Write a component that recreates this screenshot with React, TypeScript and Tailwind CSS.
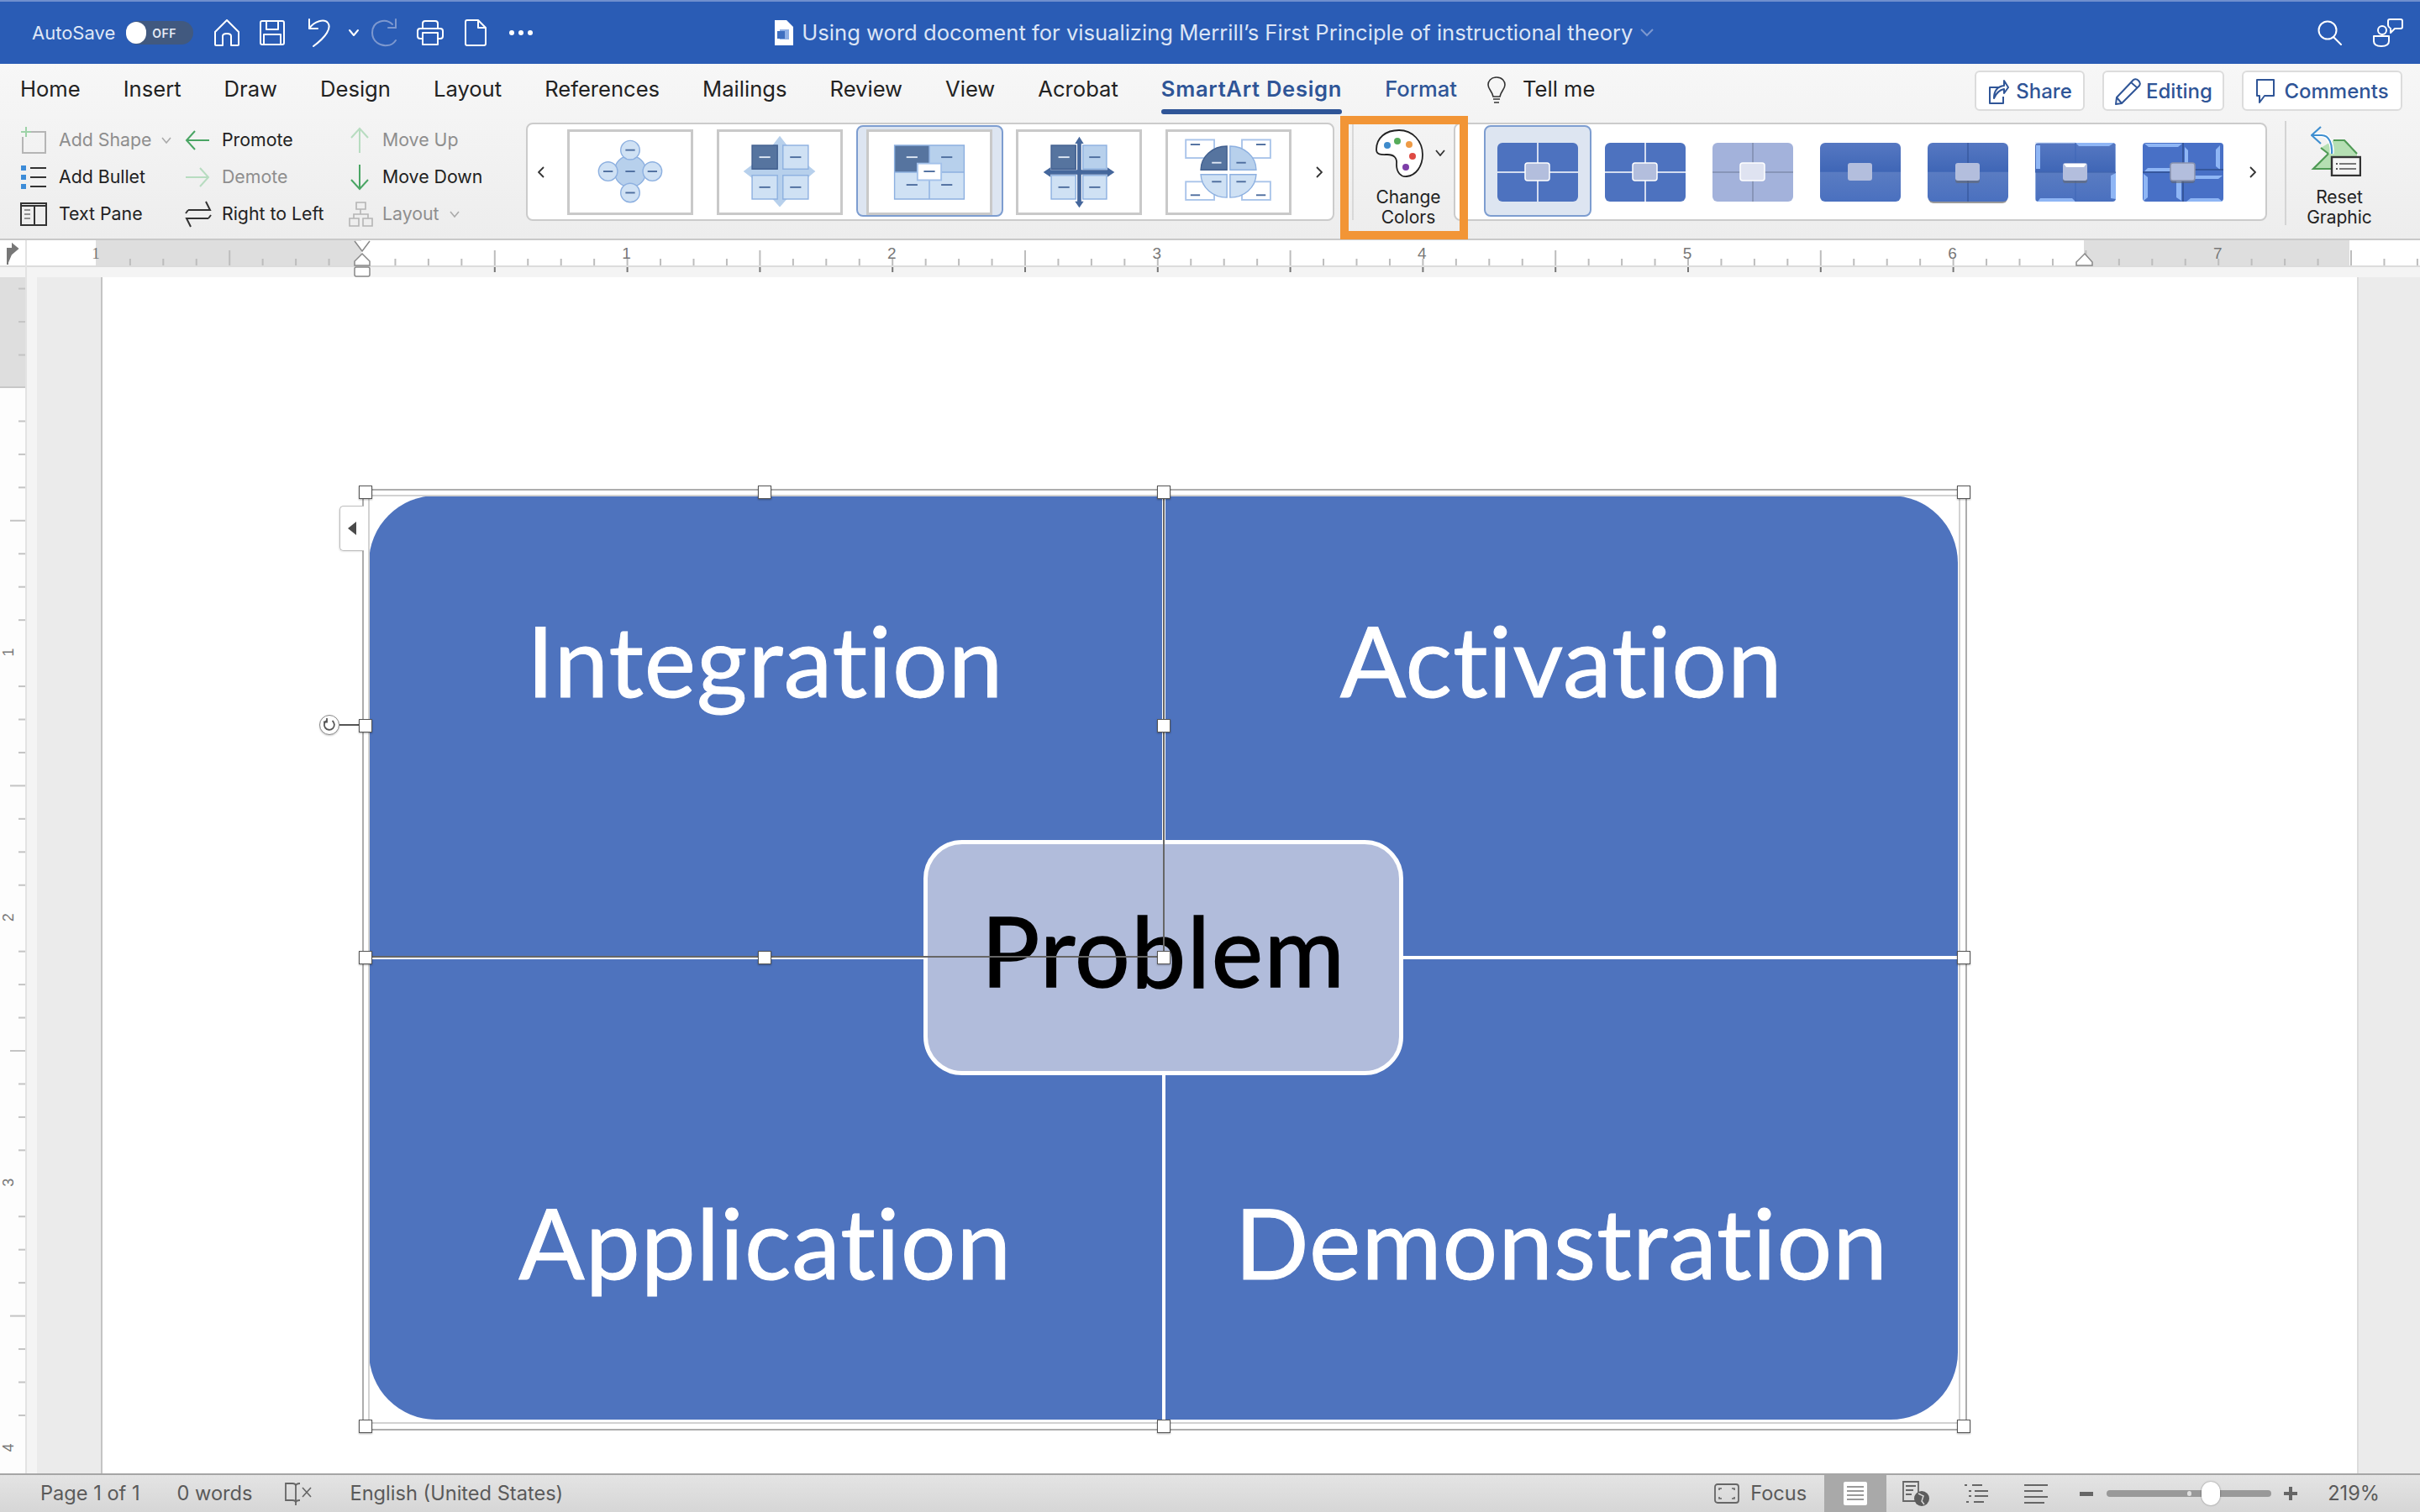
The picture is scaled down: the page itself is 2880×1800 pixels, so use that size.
import React from "react";

const W = "#ffffff";

function S({ w, h, children, className = "" }: { w: number; h: number; children: React.ReactNode; className?: string }) {
  return (
    <svg width={w} height={h} viewBox={`0 0 ${w} ${h}`} fill="none" className={`shrink-0 ${className}`}>
      {children}
    </svg>
  );
}

function TitleBar() {
  const st = { stroke: W, strokeWidth: 2, strokeLinejoin: "round" as const, strokeLinecap: "round" as const };
  return (
    <div className="h-[76px] shrink-0 flex items-center bg-[#2a5cb5] border-t-2 border-[#6f8fce] text-white">
      <span className="ml-[38px] text-[22px] text-[#dfe7f6]">AutoSave</span>
      <div className="ml-[13px] w-[80px] h-[28px] rounded-full bg-[#41597f] flex items-center">
        <div className="w-[24px] h-[26px] rounded-full bg-white" />
        <span className="ml-[7px] text-[14px] font-semibold tracking-[0.5px] text-[#e6ebf5]">OFF</span>
      </div>
      <S w={30} h={32} className="ml-[25px]">
        <path d="M1 15 L15 1 L29 15 V30 Q29 31 28 31 H20 V20 Q20 17 15 17 Q10 17 10 20 V31 H2 Q1 31 1 30 Z" {...st} />
      </S>
      <S w={30} h={30} className="ml-[24px]">
        <path d="M3 1 H27 Q29 1 29 3 V27 Q29 29 27 29 H3 Q1 29 1 27 V3 Q1 1 3 1 Z M8 1 V11 H22 V1 M5 29 V17 H25 V29" {...st} />
      </S>
      <S w={30} h={34} className="ml-[27px]">
        <path d="M2 1 V12 H12 M2 12 C8 3 20 0 24 5 C29 11 22 22 7 33" {...st} />
      </S>
      <S w={14} h={10} className="ml-[18px]">
        <path d="M2 2 L7 8 L12 2" {...st} />
      </S>
      <S w={32} h={34} className="ml-[13px]">
        <path d="M26 7 C18 -1 2 3 2 17 C2 28 12 33 20 32 C24 32 28 29 30 26 M30 1 V11 H21" stroke="#7d98cf" strokeWidth={2} strokeLinecap="round" />
      </S>
      <S w={32} h={30} className="ml-[23px]">
        <path d="M7 10 V4 Q7 1 10 1 H22 Q25 1 25 4 V10 M7 22 H4 Q1 22 1 19 V13 Q1 10 4 10 H28 Q31 10 31 13 V19 Q31 22 28 22 H25 M7 15 H25 V29 H7 Z" {...st} />
      </S>
      <S w={26} h={32} className="ml-[25px]">
        <path d="M3 1 H16 L25 10 V29 Q25 31 23 31 H3 Q1 31 1 29 V3 Q1 1 3 1 Z M16 1 V10 H25" {...st} />
      </S>
      <div className="ml-[27px] flex gap-[5px]">
        <div className="w-[6px] h-[6px] rounded-full bg-white" />
        <div className="w-[6px] h-[6px] rounded-full bg-white" />
        <div className="w-[6px] h-[6px] rounded-full bg-white" />
      </div>
      <S w={24} h={30} className="ml-[287px]">
        <path d="M1 0 H15 L23 8 V30 H1 Z" fill="#ffffff" />
        <rect x="7" y="11" width="11" height="12" fill="#8fb0e6" />
        <rect x="4" y="13" width="9" height="9" fill="#3f6fc0" />
      </S>
      <span className="ml-[9px] text-[25.6px] text-[#dce5f5] whitespace-nowrap">Using word docoment for visualizing Merrill’s First Principle of instructional theory</span>
      <S w={16} h={10} className="ml-[8px]">
        <path d="M1 1 L8 8 L15 1" stroke="#7d98cf" strokeWidth={2} />
      </S>
      <div className="ml-auto flex items-center">
        <S w={30} h={30}>
          <circle cx="12" cy="12" r="10.5" stroke={W} strokeWidth={2} />
          <path d="M19 20 L28 29" stroke={W} strokeWidth={2} strokeLinecap="round" />
        </S>
        <S w={36} h={34} className="ml-[36px] mr-[20px]">
          <circle cx="11" cy="14" r="5" {...st} />
          <path d="M1 21 H19 V27 Q19 33 10 33 Q1 33 1 27 Z" {...st} />
          <path d="M20 1 H33 Q35 1 35 3 V10 Q35 12 33 12 H26 L21 17 V12 Q18 10 18 8 V3 Q18 1 20 1 Z" {...st} />
        </S>
      </div>
    </div>
  );
}

function TabsRow() {
  const tabs = ["Home", "Insert", "Draw", "Design", "Layout", "References", "Mailings", "Review", "View", "Acrobat"];
  return (
    <div className="h-[64px] shrink-0 flex items-center text-[25.6px] text-[#222222]">
      <div className="ml-[24px] -mt-[3px] flex gap-[51px]">
        {tabs.map((t) => (
          <span key={t}>{t}</span>
        ))}
        <span className="relative font-semibold tracking-[0.7px] text-[#2f5597]">
          SmartArt Design
          <span className="absolute left-0 right-0 bottom-[-10px] h-[6px] rounded-full bg-[#2f5597]" />
        </span>
        <span className="font-medium text-[#2f5597]">Format</span>
      </div>
      <S w={24} h={32} className="ml-[35px] -mt-[3px]">
        <path d="M12 1 C5 1 2 6 2 10 C2 15 7 18 8 24 H16 C17 18 22 15 22 10 C22 6 19 1 12 1 Z M8 27 H16 M9 31 H15" stroke="#333" strokeWidth={1.6} />
      </S>
      <span className="ml-[19px] -mt-[3px]">Tell me</span>
      <div className="ml-auto mr-[21px] flex gap-[21px] text-[24px] font-medium text-[#2f5597]">
        <div className="w-[131px] h-[48px] rounded-[6px] border-2 border-[#dcdcdc] bg-white flex items-center justify-center gap-[8px] pt-[2px]">
          <S w={26} h={30}>
            <path d="M15 10 H3 V29 H19 V21 M8 23 C8 14 12 9 20 8 V2 L25 10 L20 17 V12 C15 13 11 16 8 23 Z" stroke="#2f5597" strokeWidth={2} strokeLinejoin="round" />
          </S>
          Share
        </div>
        <div className="w-[145px] h-[48px] rounded-[6px] border-2 border-[#dcdcdc] bg-white flex items-center justify-center gap-[6px] pt-[2px]">
          <S w={32} h={32}>
            <path d="M2 31 L3 23 L23 2 Q26 0 29 3 Q32 6 30 9 L9 30 Z M3 23 L9 30 M20 5 L28 12" stroke="#2f5597" strokeWidth={2} strokeLinejoin="round" />
          </S>
          Editing
        </div>
        <div className="w-[191px] h-[48px] rounded-[6px] border-2 border-[#dcdcdc] bg-white flex items-center justify-center gap-[10px] pt-[2px]">
          <S w={24} h={32}>
            <path d="M2 2 H22 V21 H11 L5 29 V21 H2 Z" stroke="#2f5597" strokeWidth={2} strokeLinejoin="round" />
          </S>
          Comments
        </div>
      </div>
    </div>
  );
}

function Row({ icon, label, off, chev, gap }: { icon: React.ReactNode; label: string; off?: boolean; chev?: boolean; gap: string }) {
  return (
    <div className={`h-[44px] flex items-center text-[21.3px] ${off ? "text-[#8e8e8e]" : "text-[#222222]"}`}>
      <div className={`flex justify-start ${gap}`}>{icon}</div>
      <span className="whitespace-nowrap">{label}</span>
      {chev && (
        <S w={12} h={8} className="ml-[12px]">
          <path d="M1 1 L6 7 L11 1" stroke="#aaa" strokeWidth={1.6} />
        </S>
      )}
    </div>
  );
}

function SmallCommands() {
  return (
    <div className="flex pt-[5px] pl-[24px] w-[605px] shrink-0">
      <div className="w-[196px] flex flex-col">
        <Row
          gap="w-[46px]"
          off
          chev
          label="Add Shape"
          icon={
            <S w={32} h={32}>
              <path d="M8 6 H30 V31 H3 V12" stroke="#b5b5b5" strokeWidth={2} />
              <path d="M7 0 V12 M1 6 H13" stroke="#9ed3a8" strokeWidth={2} />
            </S>
          }
        />
        <Row
          gap="w-[46px]"
          label="Add Bullet"
          icon={
            <S w={32} h={30}>
              <rect x="1" y="1" width="6" height="6" fill="#3d8cd8" />
              <rect x="1" y="12" width="6" height="6" fill="#3d8cd8" />
              <rect x="1" y="23" width="6" height="6" fill="#3d8cd8" />
              <path d="M12 4 H31 M12 15 H31 M12 26 H31" stroke="#333" strokeWidth={2} />
            </S>
          }
        />
        <Row
          gap="w-[46px]"
          label="Text Pane"
          icon={
            <S w={32} h={28}>
              <path d="M1 1 H31 V27 H1 Z M1 4 H31 M17 4 V27" stroke="#333" strokeWidth={2} />
              <path d="M5 9 H12 M5 14 H12 M5 19 H12" stroke="#333" strokeWidth={1.2} />
            </S>
          }
        />
      </div>
      <div className="w-[195px] flex flex-col">
        <Row
          gap="w-[44px]"
          label="Promote"
          icon={
            <S w={30} h={24}>
              <path d="M29 12 H2 M12 1 L2 12 L12 23" stroke="#4aa564" strokeWidth={2} />
            </S>
          }
        />
        <Row
          gap="w-[44px]"
          off
          label="Demote"
          icon={
            <S w={30} h={24}>
              <path d="M1 12 H28 M18 1 L28 12 L18 23" stroke="#b7dcc0" strokeWidth={2} />
            </S>
          }
        />
        <Row
          gap="w-[44px]"
          label="Right to Left"
          icon={
            <S w={32} h={32}>
              <path d="M4 11 H30 L25 1 M28 21 H2 L7 31 M4 11 L1 15 M28 21 L31 17" stroke="#333" strokeWidth={2} />
            </S>
          }
        />
      </div>
      <div className="w-[190px] flex flex-col">
        <Row
          gap="w-[40px]"
          off
          label="Move Up"
          icon={
            <S w={26} h={32}>
              <path d="M13 31 V2 M3 13 L13 2 L23 13" stroke="#b7dcc0" strokeWidth={2} />
            </S>
          }
        />
        <Row
          gap="w-[40px]"
          label="Move Down"
          icon={
            <S w={26} h={32}>
              <path d="M13 1 V30 M3 19 L13 30 L23 19" stroke="#4aa564" strokeWidth={2} />
            </S>
          }
        />
        <Row
          gap="w-[40px]"
          off
          chev
          label="Layout"
          icon={
            <S w={30} h={30}>
              <path d="M9 1 H20 V9 H9 Z M1 20 H12 V29 H1 Z M17 20 H28 V29 H17 Z M14 9 V15 M6 20 V15 H23 V20" stroke="#b5b5b5" strokeWidth={1.6} />
            </S>
          }
        />
      </div>
    </div>
  );
}

const DK = "#56749f";
const LT = "#b7d0ec";
const LL = "#cfe1f4";
const BD = "#8db0e0";
const DASH = "#4d6d9e";

function Thumb({ children, sel }: { children: React.ReactNode; sel?: boolean }) {
  return (
    <div className="relative w-[150px] h-[102px] shrink-0">
      {sel && <div className="absolute left-[-12px] right-[-13px] top-[-5px] bottom-[-2px] rounded-[8px] border-2 border-[#7d9dd0] bg-[#dde5f1]" />}
      <div className="relative w-[150px] h-[102px] bg-white border-[3px] border-[#c9c9c9]">
        <svg width="144" height="96" viewBox="0 0 150 102" fill="none" className="block">
          {children}
        </svg>
      </div>
    </div>
  );
}

function Dash({ x, y, c = DASH, w = 14 }: { x: number; y: number; c?: string; w?: number }) {
  return <rect x={x - w / 2} y={y - 1} width={w} height={2} fill={c} />;
}

function T1() {
  const sats = [
    [75, 23],
    [75, 77],
    [47, 50],
    [103, 50],
  ];
  return (
    <>
      <circle cx="75" cy="50" r="20" fill={LT} stroke={BD} strokeWidth="1.5" />
      {sats.map(([x, y]) => (
        <g key={`${x}-${y}`}>
          <circle cx={x} cy={y} r="12" fill={LL} stroke={BD} strokeWidth="1.5" />
          <Dash x={x} y={y} w={12} />
        </g>
      ))}
      <Dash x={75} y={50} w={12} />
    </>
  );
}

function T2() {
  return (
    <>
      <path d="M75 5 L85 18 H80 V84 H85 L75 95 L65 84 H70 V18 H65 Z" fill={LT} />
      <path d="M29 50 L42 40 V45 H108 V40 L120 50 L108 60 V55 H42 V60 Z" fill={LT} />
      <rect x="40" y="17" width="32" height="30" fill={DK} stroke="#415f8f" strokeWidth="1.5" />
      <rect x="79" y="17" width="32" height="30" fill={LL} stroke={BD} strokeWidth="1.5" />
      <rect x="40" y="55" width="32" height="30" fill={LL} stroke={BD} strokeWidth="1.5" />
      <rect x="79" y="55" width="32" height="30" fill={LL} stroke={BD} strokeWidth="1.5" />
      <Dash x={56} y={32} c="#dfe8f4" />
      <Dash x={95} y={32} />
      <Dash x={56} y={70} />
      <Dash x={95} y={70} />
    </>
  );
}

function T3() {
  return (
    <>
      <rect x="31" y="17" width="44" height="34" fill={DK} />
      <rect x="75" y="17" width="44" height="34" fill={LT} />
      <rect x="31" y="51" width="44" height="34" fill={LL} />
      <rect x="75" y="51" width="44" height="34" fill={LL} />
      <path d="M31 17 H119 V85 H31 Z M75 17 V85 M31 51 H119" stroke={BD} strokeWidth="1.5" />
      <rect x="60" y="40" width="30" height="21" fill="#fff" stroke="#a3c1ea" strokeWidth="2" />
      <Dash x={75} y={50} />
      <Dash x={53} y={32} c="#dfe8f4" />
      <Dash x={97} y={32} />
      <Dash x={53} y={67} />
      <Dash x={97} y={67} />
    </>
  );
}

function T4() {
  return (
    <>
      <rect x="40" y="17" width="31" height="30" fill={DK} stroke="#415f8f" strokeWidth="1.5" />
      <rect x="80" y="17" width="30" height="30" fill={LT} stroke={BD} strokeWidth="1.5" />
      <rect x="40" y="55" width="31" height="30" fill={LL} stroke={BD} strokeWidth="1.5" />
      <rect x="80" y="55" width="30" height="30" fill={LL} stroke={BD} strokeWidth="1.5" />
      <path d="M75.5 6 L81 15 H78 V48 H111 V45 L120 51 L111 57 V54 H78 V88 H81 L75.5 96 L70 88 H73 V54 H39 V57 L30 51 L39 45 V48 H73 V15 H70 Z" fill="#45679c" />
      <Dash x={56} y={32} c="#dfe8f4" />
      <Dash x={95} y={32} />
      <Dash x={56} y={70} />
      <Dash x={95} y={70} />
    </>
  );
}

function T5() {
  const box = (x: number, y: number, k: string, dx: number) => (
    <g key={k}>
      <rect x={x} y={y} width="36" height="23" fill="#fff" stroke="#a9c4ea" strokeWidth="2" />
      <Dash x={x + dx} y={y + (y < 30 ? 6 : 17)} w={12} />
    </g>
  );
  return (
    <>
      {box(21, 10, "a", 12)}
      {box(92, 10, "b", 24)}
      {box(21, 63, "c", 12)}
      {box(92, 63, "d", 24)}
      <path d="M73 18 A33 30 0 0 0 40 48 H73 Z" fill={DK} stroke="#415f8f" strokeWidth="1.5" />
      <path d="M77 18 A33 30 0 0 1 110 48 H77 Z" fill={LT} stroke={BD} strokeWidth="1.5" />
      <path d="M73 83 A33 30 0 0 1 40 54 H73 Z" fill={LL} stroke={BD} strokeWidth="1.5" />
      <path d="M77 83 A33 30 0 0 0 110 54 H77 Z" fill={LL} stroke={BD} strokeWidth="1.5" />
      <Dash x={60} y={39} c="#dfe8f4" w={12} />
      <Dash x={91} y={39} w={12} />
      <Dash x={60} y={63} w={12} />
      <Dash x={91} y={63} w={12} />
    </>
  );
}

function StyleThumb({ v }: { v: number }) {
  const id = `g${v}`;
  const base = v === 3 ? "#a3b2db" : "#4d72bf";
  const glow = "#8fb6f5";
  return (
    <svg width="96" height="74" viewBox="0 0 96 74" className="shrink-0 block">
      <defs>
        <linearGradient id={id} x1="0" y1="0" x2="0" y2="1">
          <stop offset="0" stopColor="#5678c2" />
          <stop offset="0.49" stopColor="#3f66b6" />
          <stop offset="0.5" stopColor="#5a7cc2" />
          <stop offset="1" stopColor="#4a70bf" />
        </linearGradient>
      </defs>
      {v <= 3 && <rect x="0" y="1" width="96" height="70" rx="6" fill={base} />}
      {v === 4 && <rect x="0" y="1" width="96" height="70" rx="6" fill={`url(#${id})`} />}
      {v === 5 && (
        <>
          <rect x="1" y="3" width="94" height="70" rx="6" fill="#9a9a9a" />
          <rect x="0" y="1" width="96" height="70" rx="6" fill={`url(#${id})`} />
          <path d="M48 1 V71" stroke="#2f4f90" strokeWidth="1" />
        </>
      )}
      {v <= 2 && <path d="M48 1 V71 M0 36 H96" stroke="#fff" strokeWidth="1.5" />}
      {v === 3 && <path d="M48 1 V71 M0 36 H96" stroke="#6d7895" strokeWidth="1" />}
      {v === 6 && (
        <>
          <rect x="0" y="1" width="96" height="70" rx="4" fill={`url(#${id})`} />
          <path d="M1 4 H6 V32 H1 Z M48 1 H94 L88 5 H52 Z M6 67 H44 L48 71 H3 Z M90 40 L96 37 V68 L90 67 Z" fill={glow} />
          <path d="M0 1 H48 M96 4 V36 M0 36 V70" stroke="#c8dcf8" strokeWidth="1" />
          <path d="M48 1 V71" stroke="#3f66b6" strokeWidth="1" />
          <path d="M0 36 H96" stroke="#3a5ea8" strokeWidth="1" />
        </>
      )}
      {v === 7 && (
        <>
          <rect x="0" y="1" width="96" height="70" rx="4" fill="#4870c6" />
          <path d="M2 2 H47 L42 6 H7 Z M6 31 H42 L47 35 H2 Z M50 6 L54 10 V32 L50 35 Z M92 4 V33 L87 29 V9 Z M52 40 H95 L90 44 H56 Z M52 71 L57 67 H90 L95 71 Z M1 38 L6 42 V66 L1 70 Z M40 40 L46 37 V70 L40 66 Z" fill={glow} />
          <path d="M48 1 V71 M0 36 H48 M48 33 H96" stroke="#2f4f90" strokeWidth="1.5" />
        </>
      )}
      {v >= 5 && <rect x="33" y="28" width="29" height="21" rx="3" fill="#666" opacity="0.55" />}
      <rect
        x="33"
        y="25"
        width="29"
        height="21"
        rx="3"
        fill={v === 3 ? "#dfe3f1" : "#b3bedd"}
        stroke={v <= 3 ? "#ffffff" : v === 7 ? "#8b93ad" : "none"}
        strokeWidth="1.5"
      />
      {v === 6 && <path d="M34 26 H61 L58 30 H37 Z" fill="#ffffff" />}
    </svg>
  );
}

function Galleries() {
  return (
    <>
      <div className="w-[962px] h-[117px] shrink-0 ml-[21px] mt-[6px] bg-white border-2 border-[#cbcbcb] rounded-[8px] flex items-center">
        <S w={8} h={14} className="ml-[12px]">
          <path d="M7 1 L1 7 L7 13" stroke="#333" strokeWidth={1.8} />
        </S>
        <div className="ml-[27px] flex gap-[28px]">
          <Thumb><T1 /></Thumb>
          <Thumb><T2 /></Thumb>
          <Thumb sel><T3 /></Thumb>
          <Thumb><T4 /></Thumb>
          <Thumb><T5 /></Thumb>
        </div>
        <S w={8} h={14} className="ml-[29px]">
          <path d="M1 1 L7 7 L1 13" stroke="#333" strokeWidth={1.8} />
        </S>
      </div>
      <div className="relative w-[142px] shrink-0 flex flex-col items-center">
        <div className="absolute left-[7px] right-[-17px] top-[-2px] h-[147px] border-[10px] border-[#f29536] z-10" />
        <div className="absolute left-[21px] top-[6px] h-[116px] w-[2px] bg-[#d8d8d8]" />
        <div className="relative flex items-start mt-[14px] ml-[36px] w-full">
          <S w={58} h={58} className="ml-[31px]">
            <path d="M28 1 C12 1 1 10 1 24 C1 31 8 30 14 30 C22 30 26 34 25 42 C25 51 30 57 37 56 C48 55 56 44 56 30 C56 14 44 1 28 1 Z" fill="#fff" stroke="#222" strokeWidth="1.8" />
            <circle cx="14" cy="19" r="4" fill="#3f8bcb" />
            <circle cx="26" cy="14" r="4" fill="#56ac5a" />
            <circle cx="40" cy="18" r="4" fill="#ee9b46" />
            <circle cx="44" cy="32" r="4" fill="#de4a44" />
            <circle cx="36" cy="45" r="4" fill="#7d3ea8" />
          </S>
          <S w={12} h={8} className="ml-[13px] mt-[24px]">
            <path d="M1 1 L6 7 L11 1" stroke="#333" strokeWidth={1.8} />
          </S>
        </div>
        <div className="relative ml-[34px] mt-[11px] w-[120px] text-center text-[21px] leading-[24px] text-[#222222]">Change<br />Colors</div>
      </div>
      <div className="w-[968px] h-[117px] shrink-0 mt-[6px] bg-white border-2 border-[#cbcbcb] rounded-[8px] flex items-center">
        <div className="ml-[50px] flex gap-[32px]">
          {[1, 2, 3, 4, 5, 6, 7].map((v) => (
            <div key={v} className="relative w-[96px] h-[72px] shrink-0">
              {v === 1 && <div className="absolute left-[-16px] right-[-16px] top-[-20px] bottom-[-17px] rounded-[8px] border-2 border-[#7d9dd0] bg-[#dde5f1]" />}
              <div className="relative"><StyleThumb v={v} /></div>
            </div>
          ))}
        </div>
        <S w={8} h={14} className="ml-[31px]">
          <path d="M1 1 L7 7 L1 13" stroke="#333" strokeWidth={1.8} />
        </S>
      </div>
    </>
  );
}

function Ribbon() {
  return (
    <div className="h-[144px] shrink-0 flex items-start">
      <SmallCommands />
      <Galleries />
      <div className="ml-[21px] mt-[4px] w-[2px] h-[124px] bg-[#d4d4d4]" />
      <div className="w-[126px] flex flex-col items-center">
        <S w={60} h={60} className="mt-[10px] -ml-[8px]">
          <path d="M27 17 H40 L55 33 V51 H3 L21 33 L12 26 Z" fill="#b5dfb3" />
          <path d="M27 17 H40 L55 33 M21 33 L12 26 M21 33 L3 51 H25" stroke="#4f9a55" strokeWidth="2.2" />
          <path d="M1 11 H13 C22 11 26 22 25 33" stroke="#ffffff" strokeWidth="5" />
          <path d="M1 11 H13 C22 11 26 22 25 33 M12 1 L1 11 L12 21" stroke="#3f8fd0" strokeWidth="2.2" />
          <rect x="25" y="37" width="34" height="22" fill="#f4f4f4" stroke="#333" strokeWidth="2.4" />
          <path d="M34 45 H54 M34 51 H54" stroke="#777" strokeWidth="2" />
          <path d="M30 45 H32 M30 51 H32" stroke="#555" strokeWidth="2" />
        </S>
        <div className="mt-[13px] text-center text-[21px] leading-[24px] text-[#222222]">Reset<br />Graphic</div>
      </div>
    </div>
  );
}

function HRuler() {
  const zero = 430;
  const step = 315.6 / 8;
  const ticks: React.ReactNode[] = [];
  for (let i = -8; i <= 63; i++) {
    const x = zero + i * step;
    if (i % 8 === 0) continue;
    const half = ((i % 4) + 4) % 4 === 0;
    ticks.push(<rect key={`t${i}`} x={x} y={half ? 298 - 286 : 308 - 286} width="2" height={half ? 18 : 8} fill="#bdbdbd" />);
    if (half && x > zero && x < 2480) ticks.push(<rect key={`u${i}`} x={x} y={32} width="2" height="6" fill="#777" />);
  }
  const nums = [1, 2, 3, 4, 5, 6, 7];
  return (
    <svg width="2880" height="44" viewBox="0 0 2880 44" className="block shrink-0">
      <rect width="2880" height="30" fill="#ffffff" />
      <rect y="30" width="2880" height="14" fill="#f4f4f4" />
      <rect x="114" width="316" height="30" fill="#dedede" />
      <rect x="2480" width="316" height="30" fill="#dedede" />
      <rect y="30" width="2880" height="2" fill="#dcdcdc" />
      <rect x="30" width="2" height="44" fill="#e3e3e3" />
      <path d="M9 29 V10 H17 M15 5 L21 10 L15 15 Z" stroke="#777" strokeWidth="2" fill="#777" />
      {ticks}
      <text x="114" y="22" fontSize="19" fill="#777" textAnchor="middle" fontFamily="'Liberation Serif', serif">1</text>
      {nums.map((n) => {
        const x = zero + n * 315.6;
        return (
          <g key={n}>
            <text x={x} y="22" fontSize="19" fill="#777" textAnchor="middle" fontFamily="'Liberation Sans', sans-serif">{n}</text>
            <rect x={x} y="22" width="2" height="8" fill="#bdbdbd" />
            {x < 2480 && <rect x={x} y="32" width="2" height="6" fill="#777" />}
          </g>
        );
      })}
      <path d="M422 1 L431 13 L440 1" stroke="#888" strokeWidth="1.5" fill="#fff" />
      <path d="M431 16 L440 25 V30 H422 V25 Z" stroke="#888" strokeWidth="1.5" fill="#fff" />
      <rect x="422" y="32" width="18" height="11" rx="2" stroke="#888" strokeWidth="1.5" fill="#fff" />
      <path d="M2481 16 L2490 26 V30 H2471 V26 Z" stroke="#888" strokeWidth="1.5" fill="#fff" />
    </svg>
  );
}

function VRuler() {
  const zero = 131;
  const step = 315.6 / 8;
  const t: React.ReactNode[] = [];
  for (let i = -3; i <= 36; i++) {
    const y = zero + i * step;
    const half = ((i % 4) + 4) % 4 === 0;
    if (i % 8 === 0) continue;
    t.push(<rect key={i} x={half ? 12 : 22} y={y} width={half ? 18 : 8} height="2" fill="#c4c4c4" />);
  }
  return (
    <svg width="30" height="1424" viewBox="0 0 30 1424" className="block shrink-0">
      <rect width="30" height="1424" fill="#fdfdfd" />
      <rect width="30" height="131" fill="#dedede" />
      <rect y="130" width="30" height="2" fill="#c8c8c8" />
      {t}
      {[1, 2, 3, 4].map((n) => {
        const y = zero + n * 315.6;
        return (
          <text key={n} x="0" y="0" fontSize="18" fill="#777" textAnchor="middle" fontFamily="'Liberation Sans', sans-serif" transform={`translate(16 ${y}) rotate(-90)`}>
            {n}
          </text>
        );
      })}
    </svg>
  );
}

function Handle({ className }: { className: string }) {
  return <div className={`absolute w-[16px] h-[16px] bg-white border-[1.5px] border-[#555555] shadow-[0_1px_2px_rgba(0,0,0,0.3)] z-20 ${className}`} />;
}

function Diagram() {
  const txt = "font-['Lato',sans-serif] text-[116px] leading-none tracking-[1px] [font-variant-ligatures:none] [-webkit-text-stroke:1px_#ffffff] text-white text-center";
  return (
    <div className="relative ml-[317px] mt-[260px] w-[1891px] h-[1100px]">
      <div className="grid grid-cols-2 grid-rows-2 gap-[4px] w-full h-full bg-white rounded-[80px] overflow-hidden">
        <div className={`bg-[#4e73be] pt-[138px] ${txt}`}>Integration</div>
        <div className={`bg-[#4e73be] pt-[138px] ${txt}`}>Activation</div>
        <div className={`bg-[#4e73be] pt-[279px] ${txt}`}>Application</div>
        <div className={`bg-[#4e73be] pt-[279px] ${txt}`}>Demonstration</div>
      </div>
      <div className="absolute left-[660px] top-[410px] w-[571px] h-[280px] rounded-[46px] border-[5px] border-white bg-[#b1bcdb] pt-[68px] font-['Lato',sans-serif] text-[116px] leading-none tracking-[1.5px] [font-variant-ligatures:none] [-webkit-text-stroke:1.5px_#000000] text-black text-center">Problem</div>

      <div className="absolute left-[-8px] top-[-8px] w-[1910px] h-[1121px] border-2 border-[#adadad] pointer-events-none" />
      <div className="absolute left-[-1px] top-[-1px] w-[1895px] h-[1106px] border-2 border-[#d2d2d2] pointer-events-none" />
      <div className="absolute left-[945px] top-[-8px] w-[2px] h-[557px] bg-[#666666]" />
      <div className="absolute left-[-8px] top-[548px] w-[953px] h-[2px] bg-[#666666]" />

      <Handle className="left-[-12px] top-[-12px]" />
      <Handle className="left-[463px] top-[-12px]" />
      <Handle className="left-[938px] top-[-12px]" />
      <Handle className="left-[1890px] top-[-12px]" />
      <Handle className="left-[-12px] top-[266px]" />
      <Handle className="left-[938px] top-[266px]" />
      <Handle className="left-[-12px] top-[542px]" />
      <Handle className="left-[463px] top-[542px]" />
      <Handle className="left-[938px] top-[542px]" />
      <Handle className="left-[1890px] top-[542px]" />
      <Handle className="left-[-12px] top-[1100px]" />
      <Handle className="left-[938px] top-[1100px]" />
      <Handle className="left-[1890px] top-[1100px]" />

      <div className="absolute left-[-35px] top-[12px] w-[29px] h-[54px] bg-white border border-r-0 border-[#bdbdbd] rounded-l-[5px] flex items-center justify-center shadow-[-1px_1px_2px_rgba(0,0,0,0.1)]">
        <div className="w-0 h-0 border-y-[8px] border-y-transparent border-r-[10px] border-r-[#4a4a4a]" />
      </div>
      <div className="absolute left-[-35px] top-[272px] w-[24px] h-[2px] bg-[#555555]" />
      <div className="absolute left-[-59px] top-[261px] w-[24px] h-[24px] rounded-full bg-white border border-[#888888] flex items-center justify-center shadow-[0_1px_2px_rgba(0,0,0,0.2)]">
        <svg width="16" height="16" viewBox="0 0 16 16" fill="none">
          <path d="M5 2.5 A6 6 0 1 0 11.5 3 M5 0 V4.5 H1" stroke="#555" strokeWidth="1.8" />
        </svg>
      </div>
    </div>
  );
}

function StatusBar() {
  return (
    <div className="h-[46px] shrink-0 flex items-center border-t-2 border-[#a6a6a6] bg-gradient-to-b from-[#e4e4e4] to-[#d6d6d6] text-[23.6px] text-[#5a5a5a]">
      <span className="ml-[48px]">Page 1 of 1</span>
      <span className="ml-[44px]">0 words</span>
      <S w={34} h={28} className="ml-[38px]">
        <path d="M2 2 H10 Q14 2 14 5 V25 Q14 22 10 22 H2 Z M14 5 Q14 2 19 2 M14 25 Q14 22 19 22 M14 25 V28" stroke="#666" strokeWidth="1.8" />
        <path d="M22 7 L32 18 M32 7 L22 18" stroke="#666" strokeWidth="1.6" />
      </S>
      <span className="ml-[44px]">English (United States)</span>
      <div className="ml-auto flex items-center h-full">
        <S w={30} h={24}>
          <rect x="1" y="1" width="28" height="22" rx="3" stroke="#666" strokeWidth="1.8" />
          <path d="M6 8 V6 H9 M21 6 H24 V8 M6 16 V18 H9 M24 16 V18 H21" stroke="#666" strokeWidth="1.6" />
        </S>
        <span className="ml-[13px]">Focus</span>
        <div className="ml-[21px] w-[74px] h-full bg-[#a9a9a9] flex items-center justify-center">
          <S w={28} h={28}>
            <rect width="28" height="28" rx="2" fill="#fff" />
            <path d="M4 6 H24 M4 11 H24 M4 16 H24 M4 21 H24" stroke="#9a9a9a" strokeWidth="2" />
          </S>
        </div>
        <S w={34} h={30} className="ml-[18px]">
          <path d="M2 1 H20 V24 H2 Z M5 6 H17 M5 11 H14 M5 16 H12" stroke="#666" strokeWidth="1.8" />
          <circle cx="24" cy="21" r="9" fill="#5c5c5c" />
          <path d="M20 15 L26 18 L24 24 L27 28" stroke="#d8d8d8" strokeWidth="1.5" />
        </S>
        <S w={30} h={24} className="ml-[40px]">
          <path d="M1 2 H4 M10 2 H22 M6 9 H9 M13 9 H29 M6 15 H9 M13 15 H29 M3 22 H6 M12 22 H24" stroke="#666" strokeWidth="2" />
        </S>
        <S w={28} h={24} className="ml-[42px]">
          <path d="M0 2 H28 M0 9 H22 M0 16 H28 M0 23 H24" stroke="#666" strokeWidth="2" />
        </S>
        <div className="ml-[38px] w-[16px] h-[5px] bg-[#666666]" />
        <div className="relative ml-[16px] w-[196px] h-[8px] rounded-full bg-[#999999]">
          <div className="absolute left-[96px] top-[1px] w-[5px] h-[6px] rounded-full bg-[#e0e0e0]" />
          <div className="absolute left-[113px] top-[-10px] w-[22px] h-[28px] rounded-full bg-white shadow-[0_0_2px_rgba(0,0,0,0.5)]" />
        </div>
        <span className="ml-[15px] relative w-[16px] h-[16px]">
          <span className="absolute left-0 top-[6px] w-[16px] h-[4px] bg-[#666666]" />
          <span className="absolute left-[6px] top-0 w-[4px] h-[16px] bg-[#666666]" />
        </span>
        <span className="ml-[36px] mr-[48px]">219%</span>
      </div>
    </div>
  );
}

export default function App() {
  return (
    <div className="w-[2880px] h-[1800px] flex flex-col overflow-hidden bg-white font-['Inter',sans-serif]">
      <TitleBar />
      <div className="shrink-0 bg-gradient-to-b from-[#f7f7f7] to-[#ededed] border-b-2 border-[#c9c9c9]">
        <TabsRow />
        <Ribbon />
      </div>
      <HRuler />
      <div className="flex-1 min-h-0 flex">
        <VRuler />
        <div className="w-[14px] shrink-0 bg-[#f4f4f4] border-l-2 border-[#e3e3e3]" />
        <div className="w-[78px] shrink-0 bg-[#ebebeb] border-r-2 border-[#c4c4c4]" />
        <div className="w-[2683px] shrink-0 bg-white">
          <Diagram />
        </div>
        <div className="flex-1 bg-[#ebebeb] border-l-2 border-[#dcdcdc]" />
      </div>
      <StatusBar />
    </div>
  );
}
